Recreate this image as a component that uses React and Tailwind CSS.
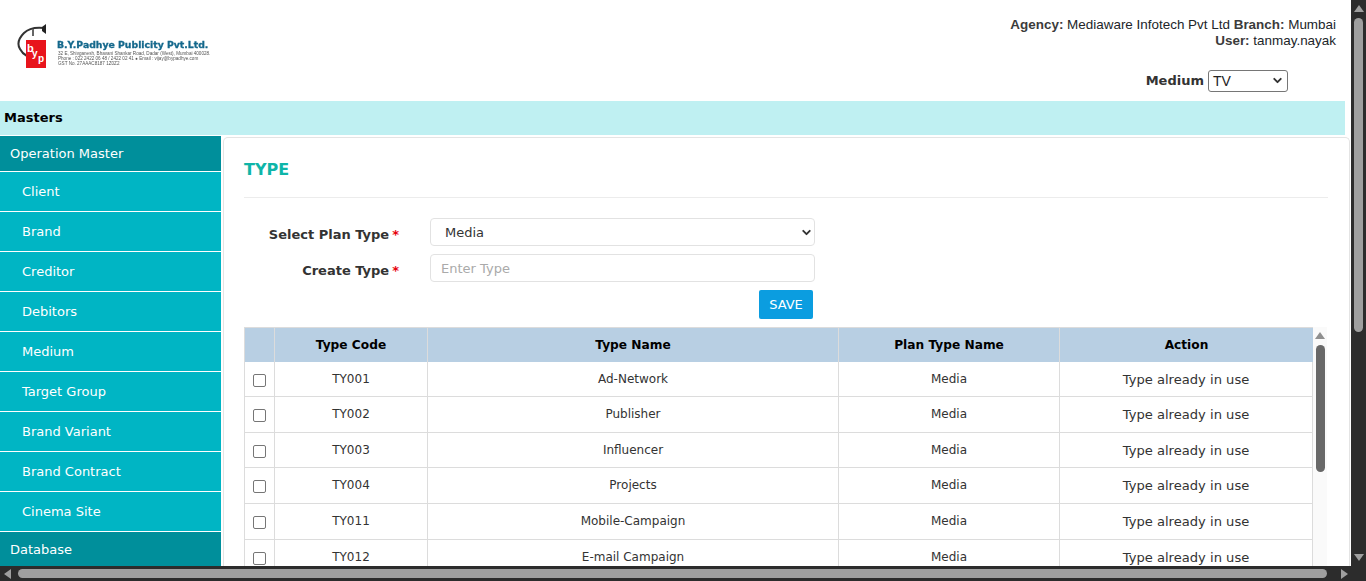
import { ChevronDown } from 'lucide-react';

const menu = ['Client', 'Brand', 'Creditor', 'Debitors', 'Medium', 'Target Group', 'Brand Variant', 'Brand Contract', 'Cinema Site'];

const filas = [
  { code: 'TY001', name: 'Ad-Network', h: 'h-[35px]' },
  { code: 'TY002', name: 'Publisher', h: 'h-[36px]' },
  { code: 'TY003', name: 'Influencer', h: 'h-[35px]' },
  { code: 'TY004', name: 'Projects', h: 'h-[36px]' },
  { code: 'TY011', name: 'Mobile-Campaign', h: 'h-[36px]' },
  { code: 'TY012', name: 'E-mail Campaign', h: 'h-[36px]' },
];

function Logo() {
  return (
    <div className="flex items-start ml-[17px] mt-[24px] blur-[0.3px]">
      <svg width="40" height="46" viewBox="0 0 40 46" className="shrink-0">
        <path d="M27 4 C 18 3 12 4 7 9 C 2 14 0 20 3 25 C 5 29 8 31 10 32" fill="none" stroke="#333" strokeWidth="2" />
        <path d="M25 3 L29 0 L29 10 L25 7 Z" fill="#222" />
        <path d="M15 5 L17 5 L17 12 L15 12 Z" fill="#666" />
        <rect x="9" y="16" width="20" height="28" fill="#e8141c" />
        <text x="10" y="28" fontSize="11" fontWeight="700" fill="#fff" fontFamily="'Liberation Sans', sans-serif">b</text>
        <text x="15" y="33" fontSize="10" fontWeight="700" fill="#fff" fontFamily="'Liberation Sans', sans-serif">y</text>
        <text x="21" y="38" fontSize="10" fontWeight="700" fill="#fff" fontFamily="'Liberation Sans', sans-serif">p</text>
      </svg>
      <div className="mt-[15px] w-[155px]">
        <div className="font-['DejaVu_Sans',sans-serif] font-bold text-[9.3px] leading-[11px] text-[#14688c] whitespace-nowrap [-webkit-text-stroke:0.3px_#14688c]">B.Y.Padhye Publicity Pvt.Ltd.</div>
        <div className="font-['Liberation_Sans',sans-serif] text-[4.6px] leading-[5px] text-[#555] whitespace-nowrap ml-[1px] mt-[1px]">
          <div>32 E, Shivganesh, Bhavani Shankar Road, Dadar (West), Mumbai 400028.</div>
          <div>Phone : 022 2422 06 48 / 2422 02 41 ● Email : vijay@bypadhye.com</div>
          <div>GST No. 27AAAC8187 1Z0Z2</div>
        </div>
      </div>
    </div>
  );
}

function Header() {
  return (
    <div className="h-[101px] flex justify-between items-start shrink-0 w-[1345px]">
      <Logo />
      <div className="flex flex-col items-end pr-[9px] pt-[17px]">
        <div className="font-['Liberation_Sans',sans-serif] text-[13.45px] leading-[16px] text-[#212529] whitespace-nowrap">
          <b className="font-bold text-[#3b3b3b]">Agency:</b> Mediaware Infotech Pvt Ltd <b className="font-bold text-[#3b3b3b]">Branch:</b> Mumbai
        </div>
        <div className="font-['Liberation_Sans',sans-serif] text-[13.45px] leading-[16px] text-[#212529] whitespace-nowrap">
          <b className="font-bold text-[#3b3b3b]">User:</b> tanmay.nayak
        </div>
        <div className="flex items-center mt-[21px] mr-[48px]">
          <span className="font-bold text-[13px] text-[#333] mr-[4px]">Medium</span>
          <div className="relative w-[80px] h-[22px] border border-[#767676] rounded-[3px] flex items-center pl-[4px] font-['Liberation_Sans',sans-serif] text-[14px] text-[#222]">
            TV
            <ChevronDown size={13} strokeWidth={3.5} className="absolute right-[3px] top-[3px] text-[#333]" />
          </div>
        </div>
      </div>
    </div>
  );
}

function Sidebar() {
  return (
    <div className="w-[221px] shrink-0 text-white text-[13px]">
      <div className="h-[36px] pl-[10px] flex items-center bg-[#008f9b] border-b border-white">Operation Master</div>
      {menu.map((m) => (
        <div key={m} className="h-[40px] pl-[22px] flex items-center bg-[#00b5c4] border-b border-white">{m}</div>
      ))}
      <div className="h-[36px] pl-[10px] flex items-center bg-[#008f9b]">Database</div>
    </div>
  );
}

function TablaTipos() {
  return (
    <div className="flex mt-[8px] w-[1083px]">
      <div className="w-[1069px] shrink-0">
        <div className="flex h-[35px] bg-[#b8cfe3] border-t border-[#dcdcdc] font-bold text-[12.2px] text-black text-center items-stretch">
          <div className="w-[30px] border-l border-[#dcdcdc]" />
          <div className="w-[153px] border-l border-[#dcdcdc] flex items-center justify-center">Type Code</div>
          <div className="w-[411px] border-l border-[#dcdcdc] flex items-center justify-center">Type Name</div>
          <div className="w-[221px] border-l border-[#dcdcdc] flex items-center justify-center">Plan Type Name</div>
          <div className="w-[254px] border-l border-[#dcdcdc] flex items-center justify-center">Action</div>
        </div>
        {filas.map((f) => (
          <div key={f.code} className={`flex ${f.h} border-b border-[#dcdcdc] text-[12px] leading-[16px] text-[#333] text-center items-stretch`}>
            <div className="w-[30px] border-l border-[#dcdcdc] flex justify-center pt-[12px]">
              <span className="block w-[13px] h-[13px] border border-[#767676] rounded-[2px]" />
            </div>
            <div className="w-[153px] border-l border-[#dcdcdc] pt-[9px]">{f.code}</div>
            <div className="w-[411px] border-l border-[#dcdcdc] pt-[9px]">{f.name}</div>
            <div className="w-[221px] border-l border-[#dcdcdc] pt-[9px]">Media</div>
            <div className="w-[254px] border-x border-[#dcdcdc] text-[13.1px] pt-[10px]">Type already in use</div>
          </div>
        ))}
      </div>
      <div className="w-[14px] shrink-0 bg-[#fafafa] flex flex-col items-center">
        <svg width="10" height="7" viewBox="0 0 10 7" className="mt-[5px]"><path d="M5 0 L10 7 L0 7 Z" fill="#8f8f8f" /></svg>
        <div className="w-[9px] h-[127px] mt-[6px] rounded-full bg-[#686868]" />
      </div>
    </div>
  );
}

function Contenido() {
  return (
    <div className="w-[1127px] ml-[2px] mt-[1px] h-[500px] border border-[#e4e4e4] rounded-[5px] border-b-0 pl-[20px] pr-[21px] overflow-hidden bg-white shrink-0">
      <div className="h-[60px] pt-[22px] border-b border-[#ececec] font-bold text-[16px] leading-[20px] text-[#0fb5a8]">TYPE</div>
      <div className="mt-[20px] flex flex-col">
        <div className="flex items-center h-[28px]">
          <label className="w-[155px] text-right font-bold text-[13px] text-[#333] pt-[6px]">Select Plan Type<span className="text-red-600 ml-[3px]">*</span></label>
          <div className="ml-[31px] relative w-[385px] h-[28px] border border-[#e2e2e2] rounded-[4px] flex items-center pl-[14px] pt-[2px] text-[13px] text-[#333]">
            Media
            <ChevronDown size={13} strokeWidth={3.5} className="absolute right-[1px] top-[7px] text-[#333]" />
          </div>
        </div>
        <div className="flex items-center h-[28px] mt-[8px]">
          <label className="w-[155px] text-right font-bold text-[13px] text-[#333] pt-[6px]">Create Type<span className="text-red-600 ml-[3px]">*</span></label>
          <input placeholder="Enter Type" className="ml-[31px] w-[385px] h-[28px] border border-[#e2e2e2] rounded-[4px] pl-[10px] text-[13px] placeholder:text-[#aaa] outline-none" />
        </div>
        <div className="w-[569px] flex justify-end mt-[8px]">
          <button className="w-[54px] h-[29px] bg-[#0b9de0] text-white text-[13px] rounded-[2px]">SAVE</button>
        </div>
      </div>
      <TablaTipos />
    </div>
  );
}

function ScrollVertical() {
  return (
    <div className="w-[15px] shrink-0 bg-[#2c2c2c] flex flex-col items-center">
      <svg width="10" height="7" viewBox="0 0 10 7" className="mt-[5px]"><path d="M5 0 L10 7 L0 7 Z" fill="#9f9f9f" /></svg>
      <div className="w-[9px] h-[314px] mt-[6px] rounded-full bg-[#9f9f9f]" />
      <div className="flex-1" />
      <svg width="10" height="7" viewBox="0 0 10 7" className="mb-[5px]"><path d="M0 0 L10 0 L5 7 Z" fill="#9f9f9f" /></svg>
    </div>
  );
}

function ScrollHorizontal() {
  return (
    <div className="h-[15px] shrink-0 bg-[#2c2c2c] flex items-center">
      <svg width="7" height="10" viewBox="0 0 7 10" className="ml-[4px]"><path d="M7 0 L7 10 L0 5 Z" fill="#9f9f9f" /></svg>
      <div className="h-[9px] w-[1309px] ml-[7px] rounded-full bg-[#9f9f9f]" />
      <svg width="7" height="10" viewBox="0 0 7 10" className="ml-[14px]"><path d="M0 0 L0 10 L7 5 Z" fill="#9f9f9f" /></svg>
    </div>
  );
}

export default function App() {
  return (
    <div className="h-[581px] w-[1366px] flex flex-col overflow-hidden bg-white font-['DejaVu_Sans',sans-serif]">
      <div className="flex flex-1 min-h-0">
        <div className="w-[1351px] flex flex-col overflow-hidden">
          <Header />
          <div className="h-[34px] w-[1345px] shrink-0 bg-[#bff0f2] flex items-center pl-[4px] font-bold text-[13px] text-black">Masters</div>
          <div className="h-[1px] shrink-0" />
          <div className="flex flex-1 min-h-0 overflow-hidden">
            <Sidebar />
            <Contenido />
          </div>
        </div>
        <ScrollVertical />
      </div>
      <ScrollHorizontal />
    </div>
  );
}
